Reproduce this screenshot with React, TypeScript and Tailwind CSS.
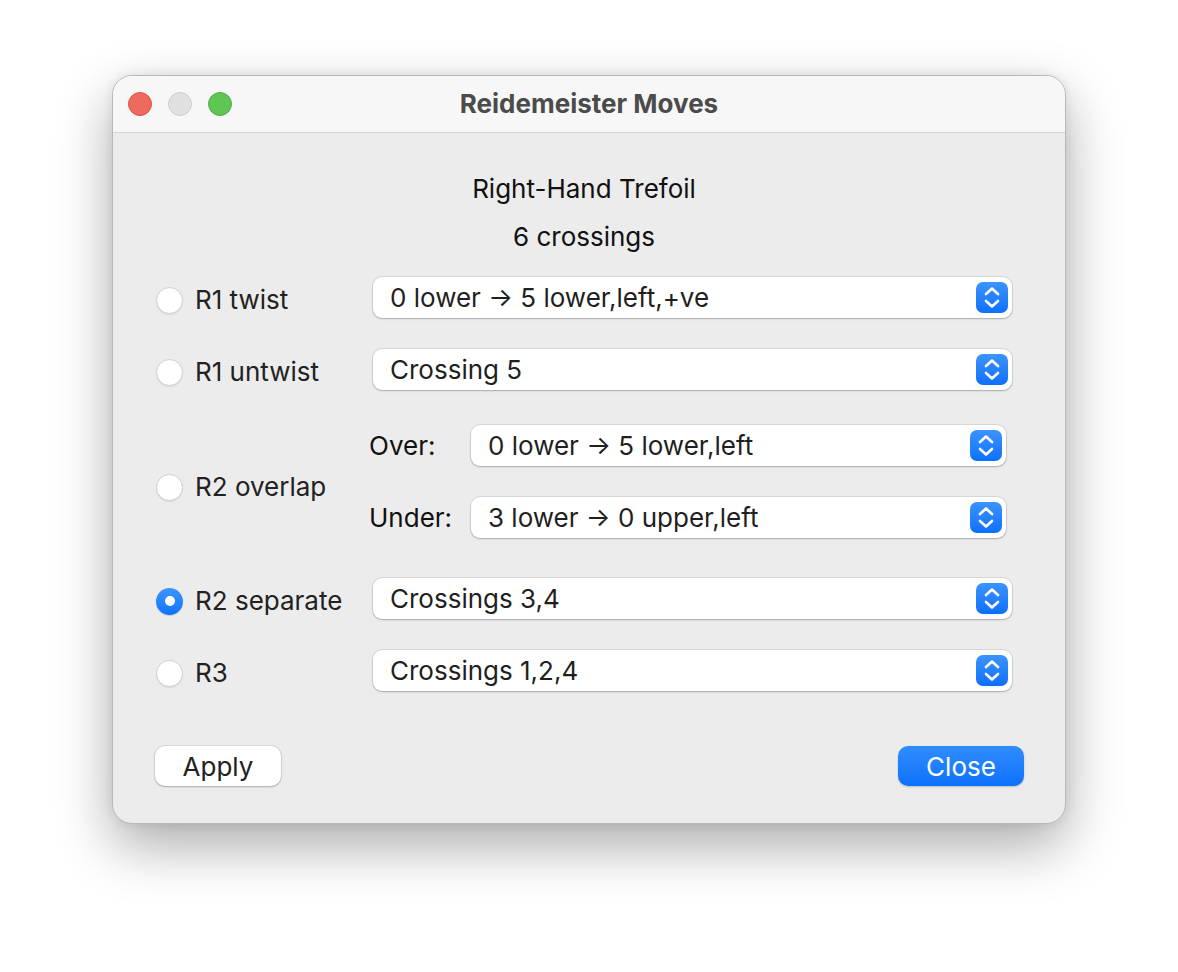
import React from 'react';

// Radio button
const Radio: React.FC<{ checked?: boolean }> = ({ checked }) => {
  if (checked) {
    return (
      <span className="flex h-[27px] w-[27px] shrink-0 items-center justify-center rounded-full bg-gradient-to-b from-[#3d95ff] to-[#0a73fb] shadow-[0_1px_1px_rgba(0,0,0,0.15)]">
        <span className="h-[10px] w-[10px] rounded-full bg-white" />
      </span>
    );
  }
  return (
    <span className="h-[27px] w-[27px] shrink-0 rounded-full border border-[#d0d0d0] bg-white shadow-[0_1px_1px_rgba(0,0,0,0.08)]" />
  );
};

// Blue up/down stepper glyph used by the popups
const Stepper: React.FC = () => (
  <span className="flex h-[31px] w-[32px] items-center justify-center rounded-[7px] bg-gradient-to-b from-[#3b93ff] to-[#0a70fb]">
    <svg width="32" height="31" viewBox="0 0 32 31" fill="none">
      <path d="M10 12 L16 6.5 L22 12" stroke="white" strokeWidth="2.6" strokeLinecap="round" strokeLinejoin="round" />
      <path d="M10 19 L16 24.5 L22 19" stroke="white" strokeWidth="2.6" strokeLinecap="round" strokeLinejoin="round" />
    </svg>
  </span>
);

// Popup (select) control
const Popup: React.FC<{ value: string; className?: string }> = ({ value, className }) => (
  <div
    className={
      'flex h-[41px] items-center justify-between rounded-[9px] bg-white pl-[17px] pr-[4px] shadow-[0_0_0_1px_rgba(0,0,0,0.08),0_1px_2px_rgba(0,0,0,0.22)] ' +
      (className ?? '')
    }
  >
    <span className="text-[26px] leading-[30px] text-[#1f1f1f]">{value}</span>
    <Stepper />
  </div>
);

const RadioLabel: React.FC<{ label: string; checked?: boolean }> = ({ label, checked }) => (
  <div className="mt-[5px] flex w-[217px] shrink-0 items-center gap-[12px]">
    <Radio checked={checked} />
    <span className="text-[26px] leading-[30px] text-[#222]">{label}</span>
  </div>
);

export default function App() {
  return (
    <div className="min-h-screen bg-white pl-[112px] pt-[75px] font-['Inter','Liberation_Sans',sans-serif]">
      <div className="w-[954px] overflow-hidden rounded-[20px] border border-[#b9b9b9] bg-[#ececec] shadow-[0_22px_55px_rgba(0,0,0,0.33),0_0_12px_rgba(0,0,0,0.08)]">
        {/* Title bar */}
        <div className="relative flex h-[57px] items-center justify-center border-b border-[#d3d3d3] bg-[#f7f7f7]">
          <div className="absolute left-[15px] top-[16px] flex gap-[16px]">
            <span className="h-[24px] w-[24px] rounded-full border border-[#d9534d] bg-[#ee6a5f]" />
            <span className="h-[24px] w-[24px] rounded-full border border-[#cdcdcd] bg-[#e0e0e0]" />
            <span className="h-[24px] w-[24px] rounded-full border border-[#4fae45] bg-[#61c554]" />
          </div>
          <span className="mt-[-2px] text-[26px] font-bold text-[#4b4b4b]">Reidemeister Moves</span>
        </div>

        {/* Body */}
        <div className="pl-[43px] pr-[53px] pt-[42px] pb-[37px]">
          <div className="flex flex-col items-center gap-[20px] text-[26px] leading-[28px] text-[#111]">
            <span>Right-Hand Trefoil</span>
            <span>6 crossings</span>
          </div>

          <div className="mt-[26px] flex items-center">
            <RadioLabel label="R1 twist" />
            <Popup className="flex-1" value="0 lower → 5 lower,left,+ve" />
          </div>

          <div className="mt-[31px] flex items-center">
            <RadioLabel label="R1 untwist" />
            <Popup className="flex-1" value="Crossing 5" />
          </div>

          <div className="mt-[35px] flex">
            <div className="mt-[42px] self-start">
              <RadioLabel label="R2 overlap" />
            </div>
            <div className="ml-[-4px] flex flex-1 flex-col gap-[31px] pr-[6px]">
              <div className="flex items-center">
                <span className="w-[102px] shrink-0 text-[26px] text-[#111]">Over:</span>
                <Popup className="flex-1" value="0 lower → 5 lower,left" />
              </div>
              <div className="flex items-center">
                <span className="w-[102px] shrink-0 text-[26px] text-[#111]">Under:</span>
                <Popup className="flex-1" value="3 lower → 0 upper,left" />
              </div>
            </div>
          </div>

          <div className="mt-[40px] flex items-center">
            <RadioLabel label="R2 separate" checked />
            <Popup className="flex-1" value="Crossings 3,4" />
          </div>

          <div className="mt-[31px] flex items-center">
            <RadioLabel label="R3" />
            <Popup className="flex-1" value="Crossings 1,2,4" />
          </div>

          <div className="mt-[55px] flex items-center justify-between">
            <button className="ml-[-1px] flex h-[40px] w-[126px] items-center justify-center rounded-[10px] bg-white text-[26px] text-[#222] shadow-[0_0_0_1px_rgba(0,0,0,0.07),0_1px_2px_rgba(0,0,0,0.22)]">
              Apply
            </button>
            <button className="mr-[-12px] flex h-[40px] w-[126px] items-center justify-center rounded-[10px] bg-gradient-to-b from-[#2f8cff] to-[#0a72fb] text-[26px] text-white shadow-[0_1px_2px_rgba(0,0,0,0.2)]">
              Close
            </button>
          </div>
        </div>
      </div>
    </div>
  );
}
